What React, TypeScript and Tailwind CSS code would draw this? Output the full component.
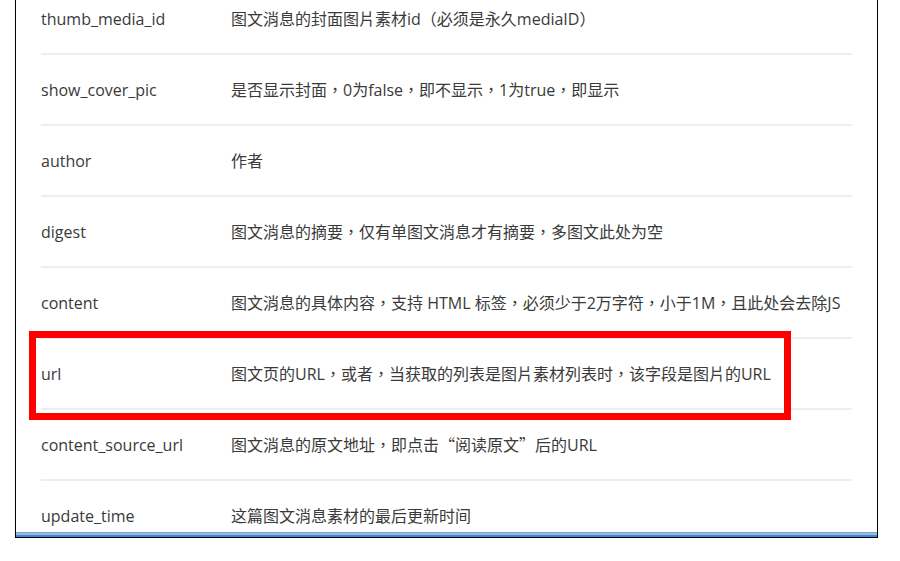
import React from "react";

const Q = ({ c }: { c: string }) => (
  <span style={{ fontFamily: '"Noto Sans CJK TC", sans-serif' }}>{c}</span>
);

const rows: [string, React.ReactNode][] = [
  ["thumb_media_id", "图文消息的封面图片素材id（必须是永久mediaID）"],
  ["show_cover_pic", "是否显示封面，0为false，即不显示，1为true，即显示"],
  ["author", "作者"],
  ["digest", "图文消息的摘要，仅有单图文消息才有摘要，多图文此处为空"],
  ["content", "图文消息的具体内容，支持 HTML 标签，必须少于2万字符，小于1M，且此处会去除JS"],
  ["url", "图文页的URL，或者，当获取的列表是图片素材列表时，该字段是图片的URL"],
  [
    "content_source_url",
    <>
      图文消息的原文地址，即点击<Q c="“" />阅读原文<Q c="”" />后的URL
    </>,
  ],
  ["update_time", "这篇图文消息素材的最后更新时间"],
];

export default function App() {
  return (
    <div
      className="w-[900px] h-[561px] bg-white overflow-hidden"
      style={{ fontFamily: '"Open Sans", "Noto Sans CJK TC", sans-serif' }}
    >
      <div className="relative ml-[15px] w-[863px] h-[538px] border-l border-r border-b border-black flex flex-col">
        <div className="flex-1 overflow-hidden px-[25px]">
          <div className="mt-[-16px]">
            {rows.map(([k, v]) => (
              <div
                key={k}
                className="h-[71px] flex items-center border-b-2 border-[#eeeeee] text-[16px] text-[#3a3a3a]"
              >
                <div className="w-[190px] shrink-0">{k}</div>
                <div className="whitespace-nowrap">{v}</div>
              </div>
            ))}
          </div>
        </div>
        <div className="h-[5px] shrink-0 flex flex-col">
          <div className="h-px bg-[#8d9db0]" />
          <div className="h-[2px] bg-[#8ec0ee]" />
          <div className="h-[2px] bg-[#3f86db]" />
        </div>
        <div className="absolute left-[13px] top-[331px] w-[762px] h-[89px] border-[7px] border-[#ff0000] pointer-events-none" />
      </div>
    </div>
  );
}
